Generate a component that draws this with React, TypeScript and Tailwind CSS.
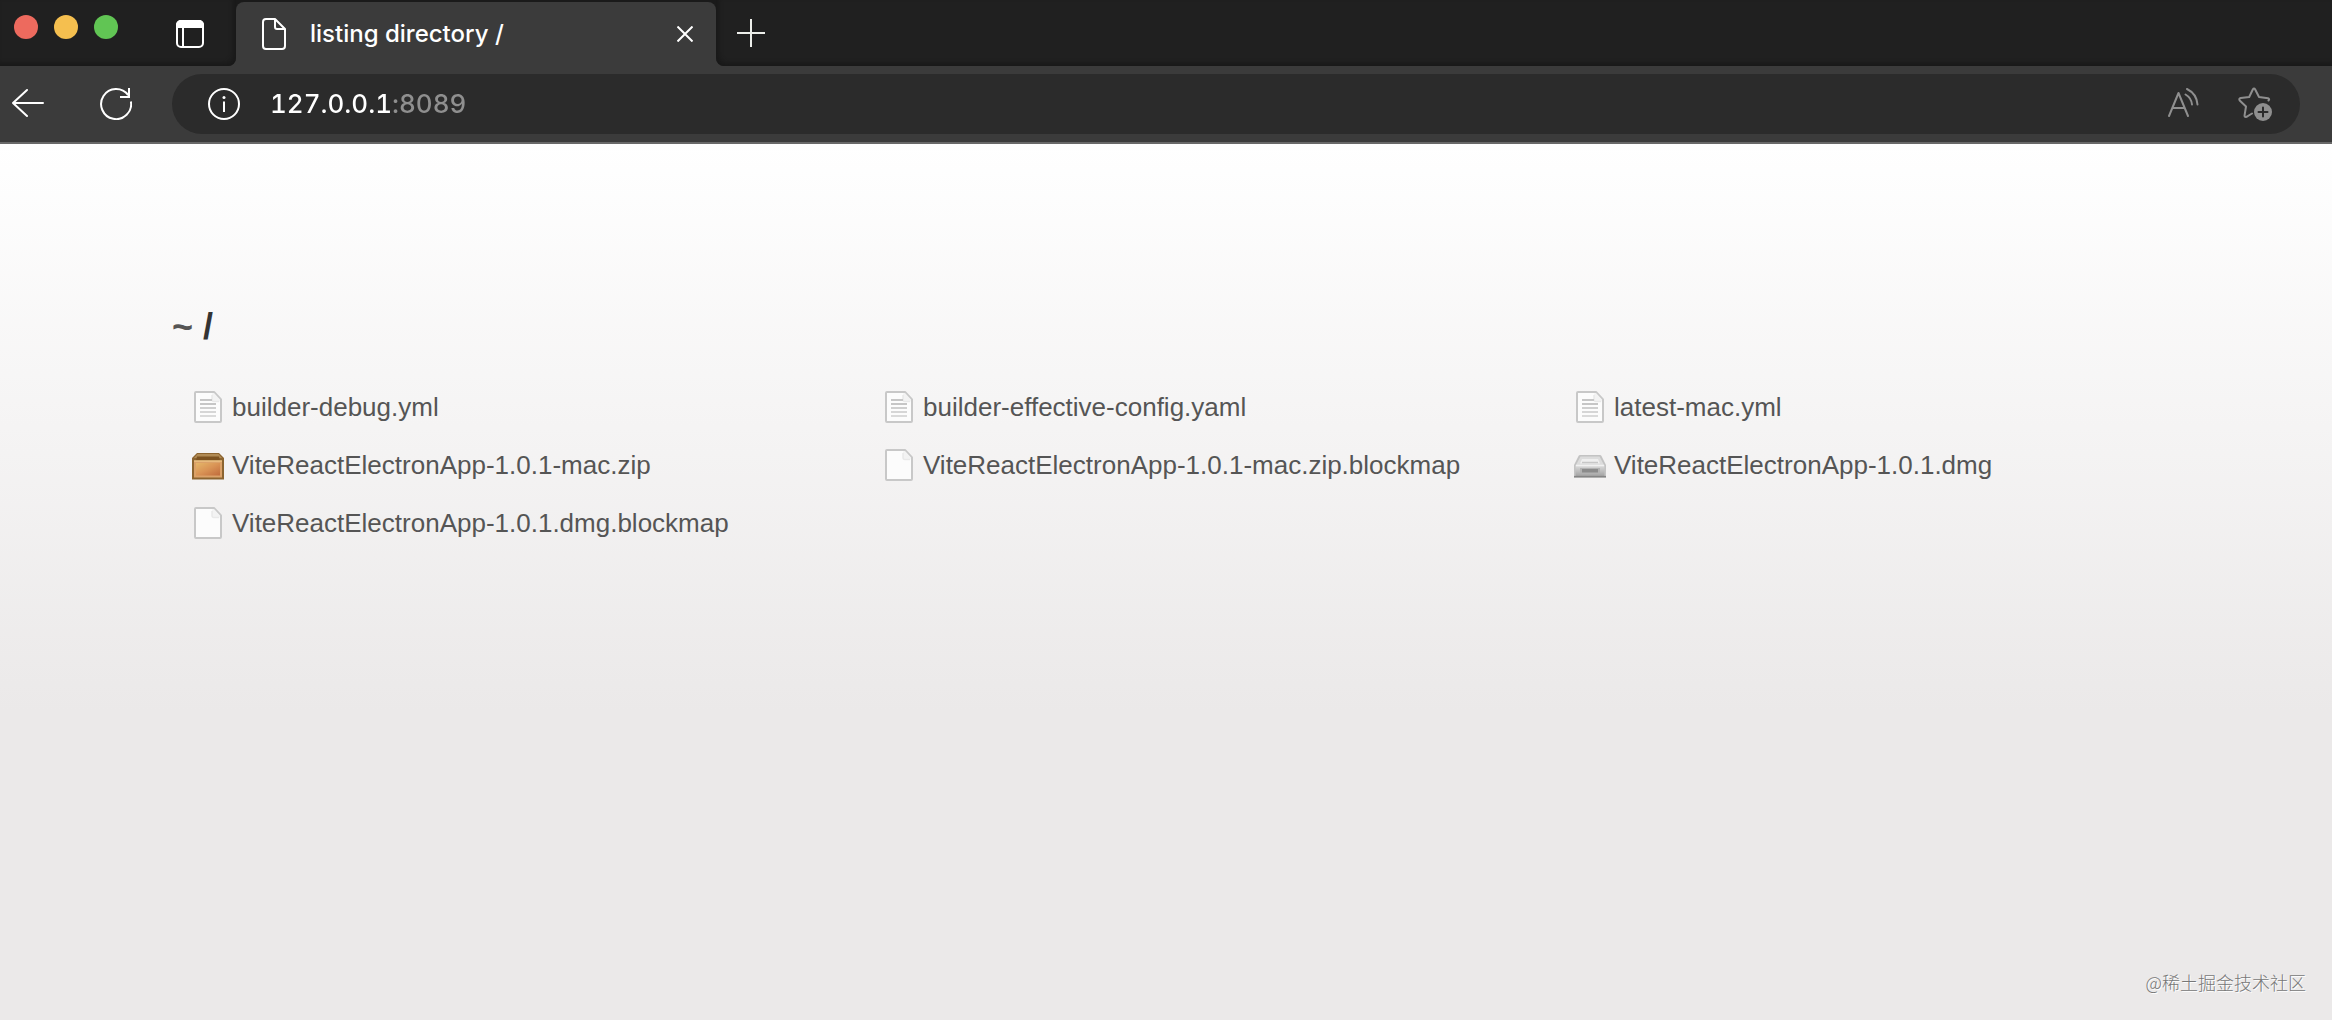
import React from 'react';

type FileKind = 'text' | 'blank' | 'zip' | 'dmg';

interface FileEntry {
  name: string;
  kind: FileKind;
}

const files: FileEntry[] = [
  { name: 'builder-debug.yml', kind: 'text' },
  { name: 'builder-effective-config.yaml', kind: 'text' },
  { name: 'latest-mac.yml', kind: 'text' },
  { name: 'ViteReactElectronApp-1.0.1-mac.zip', kind: 'zip' },
  { name: 'ViteReactElectronApp-1.0.1-mac.zip.blockmap', kind: 'blank' },
  { name: 'ViteReactElectronApp-1.0.1.dmg', kind: 'dmg' },
  { name: 'ViteReactElectronApp-1.0.1.dmg.blockmap', kind: 'blank' },
];

const PageIcon = ({ lines }: { lines: boolean }) => (
  <svg width="32" height="32" viewBox="0 0 32 32" aria-hidden="true">
    <path d="M4 1h18l7 7.500V30q0 1-1 1H4q-1 0-1-1V2q0-1 1-1z" fill="#fcfcfc" stroke="#c8c8c8" strokeWidth="2" strokeLinejoin="round" />
    <path d="M20 2.500v6q0 2 2 2h6V8.500L22 2z" fill="#f3f3f3" />
    <path d="M20 4v4.500q0 2 2 2h5" fill="none" stroke="#e9e9e9" strokeWidth="1.500" />
    {lines && (
      <g strokeWidth="2">
        <path d="M8 9h12" stroke="#c6c6c6" />
        <path d="M8 13h16" stroke="#c6c6c6" />
        <path d="M8 17h16" stroke="#cfcfcf" />
        <path d="M8 21h16" stroke="#d6d6d6" />
        <path d="M8 25h16" stroke="#dadada" />
      </g>
    )}
  </svg>
);

const ZipIcon = () => (
  <svg width="32" height="32" viewBox="0 0 32 32" aria-hidden="true">
    <defs>
      <linearGradient id="boxFront" x1="0" y1="0" x2="1" y2="1">
        <stop offset="0" stopColor="#e5b669" />
        <stop offset="0.5" stopColor="#d99355" />
        <stop offset="1" stopColor="#c06b3c" />
      </linearGradient>
    </defs>
    <path d="M5 4h22l5 5v21.500H0V9z" fill="#8c6430" />
    <path d="M5.500 5h21l3.500 4H2z" fill="#b08a54" />
    <path d="M5 7.500h22l1 4H4z" fill="#7c5220" />
    <rect x="2" y="12" width="28" height="16.500" fill="#dba168" />
    <rect x="4" y="14" width="24" height="12.500" fill="url(#boxFront)" />
    <path d="M2 12h28" stroke="#ecc384" strokeWidth="1.500" />
  </svg>
);

const DiskIcon = () => (
  <svg width="32" height="32" viewBox="0 0 32 32" aria-hidden="true">
    <defs>
      <linearGradient id="diskFront" x1="0" y1="0" x2="0" y2="1">
        <stop offset="0" stopColor="#dedede" />
        <stop offset="1" stopColor="#a4a4a4" />
      </linearGradient>
    </defs>
    <path d="M6 6h20q1 0 1.500 1L32 16v12.500H0V16L4.500 7Q5 6 6 6z" fill="#c3c3c3" />
    <path d="M6.500 7.500h19L30 16H2z" fill="#dcdcdc" />
    <path d="M8 10h16l2 4.500H6z" fill="#efefef" />
    <path d="M8 13.500h16" stroke="#c7c7c7" strokeWidth="1.500" />
    <rect x="1.500" y="16" width="29" height="11" fill="url(#diskFront)" />
    <path d="M2 16.500h28" stroke="#f1f1f1" strokeWidth="1.500" />
    <rect x="6" y="19" width="20" height="5.500" fill="#b2b2b2" />
    <rect x="8" y="20" width="16" height="3.500" fill="#8b8b8b" />
    <path d="M0 27.700h32" stroke="#858585" strokeWidth="1.600" />
  </svg>
);

const FileIcon = ({ kind }: { kind: FileKind }) => {
  if (kind === 'zip') return <ZipIcon />;
  if (kind === 'dmg') return <DiskIcon />;
  return <PageIcon lines={kind === 'text'} />;
};

const TabStrip = () => (
  <div className="flex h-[66px] bg-[#3b3b3b]">
    <div className="flex w-[236px] shrink-0 items-center rounded-br-lg bg-[#202020] pl-3.5 shadow-[inset_-3px_-3px_4px_#191919]">
      <div className="flex gap-4 pb-3">
        <button aria-label="Close window" className="size-6 rounded-full bg-[#ed6a5e]" />
        <button aria-label="Minimize window" className="size-6 rounded-full bg-[#f5bf4f]" />
        <button aria-label="Zoom window" className="size-6 rounded-full bg-[#61c554]" />
      </div>
      <button aria-label="Tab actions menu" className="ml-[58px] pt-0.5">
        <svg width="28" height="28" viewBox="0 0 28 28">
          <rect x="1" y="1" width="26" height="26" rx="4" fill="none" stroke="#fff" strokeWidth="2" />
          <path d="M0 8V5a5 5 0 0 1 5-5h18a5 5 0 0 1 5 5v3z" fill="#fff" />
          <path d="M7 8v19" stroke="#fff" strokeWidth="2" />
        </svg>
      </button>
    </div>
    <div className="w-[480px] shrink-0 bg-[#1a1a1a] pt-0.5">
      <div className="flex h-16 items-center rounded-t-lg bg-[#3b3b3b] pr-[23px] pl-[26px]">
        <svg width="24" height="32" viewBox="0 0 24 32" fill="none" stroke="#fff" strokeWidth="2" strokeLinejoin="round" aria-hidden="true">
          <path d="M4 1h9l10 10v17a3 3 0 0 1-3 3H4a3 3 0 0 1-3-3V4a3 3 0 0 1 3-3z" />
          <path d="M13 1v8a2 2 0 0 0 2 2h8" />
        </svg>
        <span className="ml-6 flex-1 text-2xl leading-8 font-medium text-white">listing directory /</span>
        <button aria-label="Close tab">
          <svg width="16" height="16" viewBox="0 0 16 16" stroke="#fff" strokeWidth="2">
            <path d="M0.500 0.500l15 15M15.500 0.500l-15 15" />
          </svg>
        </button>
      </div>
    </div>
    <div className="flex flex-1 items-center rounded-bl-lg bg-[#202020] pl-[21px] shadow-[inset_3px_-3px_4px_#191919]">
      <button aria-label="New tab">
        <svg width="28" height="28" viewBox="0 0 28 28" stroke="#eceeea" strokeWidth="2">
          <path d="M14 0v28M0 14h28" />
        </svg>
      </button>
    </div>
  </div>
);

const Toolbar = () => (
  <div className="flex items-center border-b-2 border-[#696969] bg-[#3b3b3b] py-2 pr-8 pl-3">
    <button aria-label="Back">
      <svg width="32" height="32" viewBox="0 0 32 32" fill="none" stroke="#fff" strokeWidth="2" strokeLinecap="round" strokeLinejoin="round">
        <path d="M15 2 1 15 15 28M1 15h30" />
      </svg>
    </button>
    <button aria-label="Refresh" className="ml-14">
      <svg width="32" height="32" viewBox="0 0 32 32" fill="none" stroke="#fff" strokeWidth="2">
        <path d="M30.900 13.500A15 15 0 1 1 28.200 7.200" />
        <path d="M29 0v9H20" />
      </svg>
    </button>
    <div className="ml-10 flex h-[60px] flex-1 items-center rounded-full bg-[#2b2b2b] pr-7 pl-9">
      <button aria-label="View site information">
        <svg width="32" height="32" viewBox="0 0 32 32" fill="none" stroke="#fff" strokeWidth="2">
          <circle cx="16" cy="16" r="15" />
          <path d="M16 13.500v10.500" />
          <circle cx="16" cy="9.500" r="1.500" fill="#fff" stroke="none" />
        </svg>
      </button>
      {/* host is drawn white, the port that follows it grey */}
      <input
        type="text"
        aria-label="Address"
        defaultValue="127.0.0.1:8089"
        className="ml-[30px] min-w-0 flex-1 bg-[linear-gradient(to_right,#ffffff_121px,#8f8f8f_121px)] bg-clip-text text-[26px] leading-9 font-medium text-transparent tabular-nums caret-white outline-none [font-variant-ligatures:no-contextual]"
      />
      <button aria-label="Read this page aloud">
        <svg width="32" height="32" viewBox="0 0 32 32" fill="none" stroke="#8f8f8f" strokeWidth="2" strokeLinecap="round">
          <path d="M1 28 10.500 5 20 28M4.500 20h12" strokeLinejoin="round" />
          <path d="M17.500 6.500A13 13 0 0 1 24 16.500" />
          <path d="M19 1A19 19 0 0 1 29.500 16.500" />
        </svg>
      </button>
      <button aria-label="Add this page to favorites" className="ml-[38px]">
        <svg width="34" height="34" viewBox="0 0 34 34" fill="none" stroke="#8f8f8f" strokeWidth="2" strokeLinecap="round" strokeLinejoin="round">
          <path d="M14 26.500 8.500 29.800Q6.300 30.600 6.600 28.200L8 19.500 1.700 13.500Q0.500 11.500 2.800 11L11.200 10 14.800 2.500Q16 0.500 17.200 2.500L21 10 30 11.200Q32 12 30.500 13.500" />
          <circle cx="25" cy="25" r="9" fill="#8f8f8f" stroke="none" />
          <path d="M25 20.500v9M20.500 25h9" stroke="#2b2b2b" />
        </svg>
      </button>
    </div>
  </div>
);

const DirectoryListing = () => (
  <main className="bg-linear-to-b from-white to-[#ebe9e9] pt-40 pr-[87px] pb-40 pl-[172px] font-['Liberation_Sans',Arial,sans-serif] text-[#555]">
    <h1 className="text-4xl leading-[46px] font-bold">
      <a href="#home">~</a> <a href="#root" className="text-[#343434]">/</a>
    </h1>
    <ul className="mt-7 grid grid-cols-3">
      {files.map((file) => (
        <li key={file.name} className="px-5">
          <a href={`#${file.name}`} className="flex h-[58px] items-center gap-2 text-[26px] leading-8 whitespace-nowrap">
            <FileIcon kind={file.kind} />
            {file.name}
          </a>
        </li>
      ))}
    </ul>
  </main>
);

export default function App() {
  return (
    <div className="relative min-h-screen bg-[#ebe9e9] font-[Inter,sans-serif]">
      <header>
        <TabStrip />
        <Toolbar />
      </header>
      <DirectoryListing />
      <span className="absolute right-[26px] bottom-[26px] font-['Noto_Sans_CJK_SC',sans-serif] text-lg leading-6 font-light text-[#777] [text-shadow:1px_1px_0_#fff]">
        @稀土掘金技术社区
      </span>
    </div>
  );
}
